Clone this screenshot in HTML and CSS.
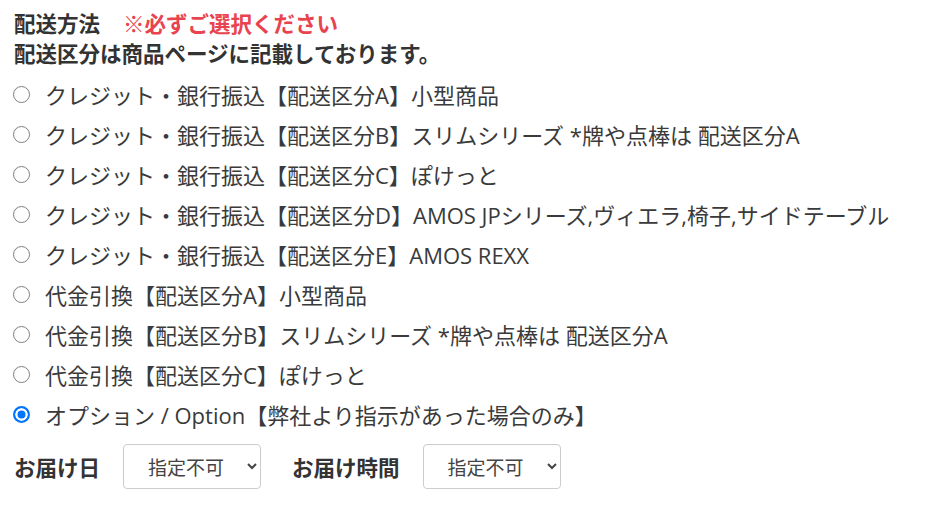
FILE: index.html
```html
<!DOCTYPE html>
<html lang="ja">
<head>
<meta charset="utf-8">
<link rel="stylesheet" href="styles.css">
</head>
<body>
<div class="form">
  <div class="title"><span>配送方法</span><span class="req">※必ずご選択ください</span></div>
  <div class="note">配送区分は商品ページに記載しております。</div>
  <ul class="options">
    <li><label><input type="radio" name="ship"><span>クレジット・銀行振込【配送区分A】小型商品</span></label></li>
    <li><label><input type="radio" name="ship"><span>クレジット・銀行振込【配送区分B】スリムシリーズ *牌や点棒は 配送区分A</span></label></li>
    <li><label><input type="radio" name="ship"><span>クレジット・銀行振込【配送区分C】ぽけっと</span></label></li>
    <li><label><input type="radio" name="ship"><span>クレジット・銀行振込【配送区分D】AMOS JPシリーズ,ヴィエラ,椅子,サイドテーブル</span></label></li>
    <li><label><input type="radio" name="ship"><span>クレジット・銀行振込【配送区分E】AMOS REXX</span></label></li>
    <li><label><input type="radio" name="ship"><span>代金引換【配送区分A】小型商品</span></label></li>
    <li><label><input type="radio" name="ship"><span>代金引換【配送区分B】スリムシリーズ *牌や点棒は 配送区分A</span></label></li>
    <li><label><input type="radio" name="ship"><span>代金引換【配送区分C】ぽけっと</span></label></li>
    <li><label><input type="radio" name="ship" checked><span>オプション / Option【弊社より指示があった場合のみ】</span></label></li>
  </ul>
  <div class="delivery">
    <span class="dlabel">お届け日</span>
    <select class="sel"><option>指定不可</option></select>
    <span class="dlabel">お届け時間</span>
    <select class="sel"><option>指定不可</option></select>
  </div>
</div>
</body>
</html>
```
FILE: styles.css
```css
html, body {
  margin: 0;
  padding: 0;
  background: #fff;
}
body {
  font-family: "Noto Sans CJK JP", "Noto Sans", sans-serif;
  color: #333;
}
.form {
  padding: 8px 14px 0 13px;
}
.title, .note {
  font-size: 21.5px;
  font-weight: 700;
  line-height: 30px;
  padding-left: 1px;
}
.title {
  display: flex;
  gap: 23px;
}
.req {
  color: #e8434f;
}
.options {
  list-style: none;
  margin: 6px 0 0 0;
  padding: 0;
}
.options li {
  height: 40px;
  display: flex;
  align-items: center;
}
.options label {
  display: flex;
  align-items: center;
  gap: 15px;
  font-family: "Open Sans", "Noto Sans CJK JP", sans-serif;
  font-size: 22px;
  color: #3a3a3a;
}
.options input {
  -webkit-appearance: none;
  appearance: none;
  box-sizing: border-box;
  width: 17px;
  height: 17px;
  min-width: 17px;
  margin: 0;
  border: 1.5px solid #808080;
  border-radius: 50%;
  background: #fff;
  flex: 0 0 17px;
}
.options input:checked {
  border: 2px solid #0075ff;
  background: #0075ff;
  box-shadow: inset 0 0 0 2.5px #fff;
}
.delivery {
  display: flex;
  align-items: center;
  margin-top: 10px;
  padding-left: 1px;
}
.dlabel {
  font-size: 21.5px;
  font-weight: 700;
}
.sel {
  width: 138px;
  height: 45px;
  border: 1px solid #ccc;
  border-radius: 4px;
  background: #fff;
  color: #444;
  font-family: "Noto Sans CJK JP", sans-serif;
  font-size: 19px;
  padding: 0 8px 0 20px;
  margin: 0 31px 0 23px;
}
```
